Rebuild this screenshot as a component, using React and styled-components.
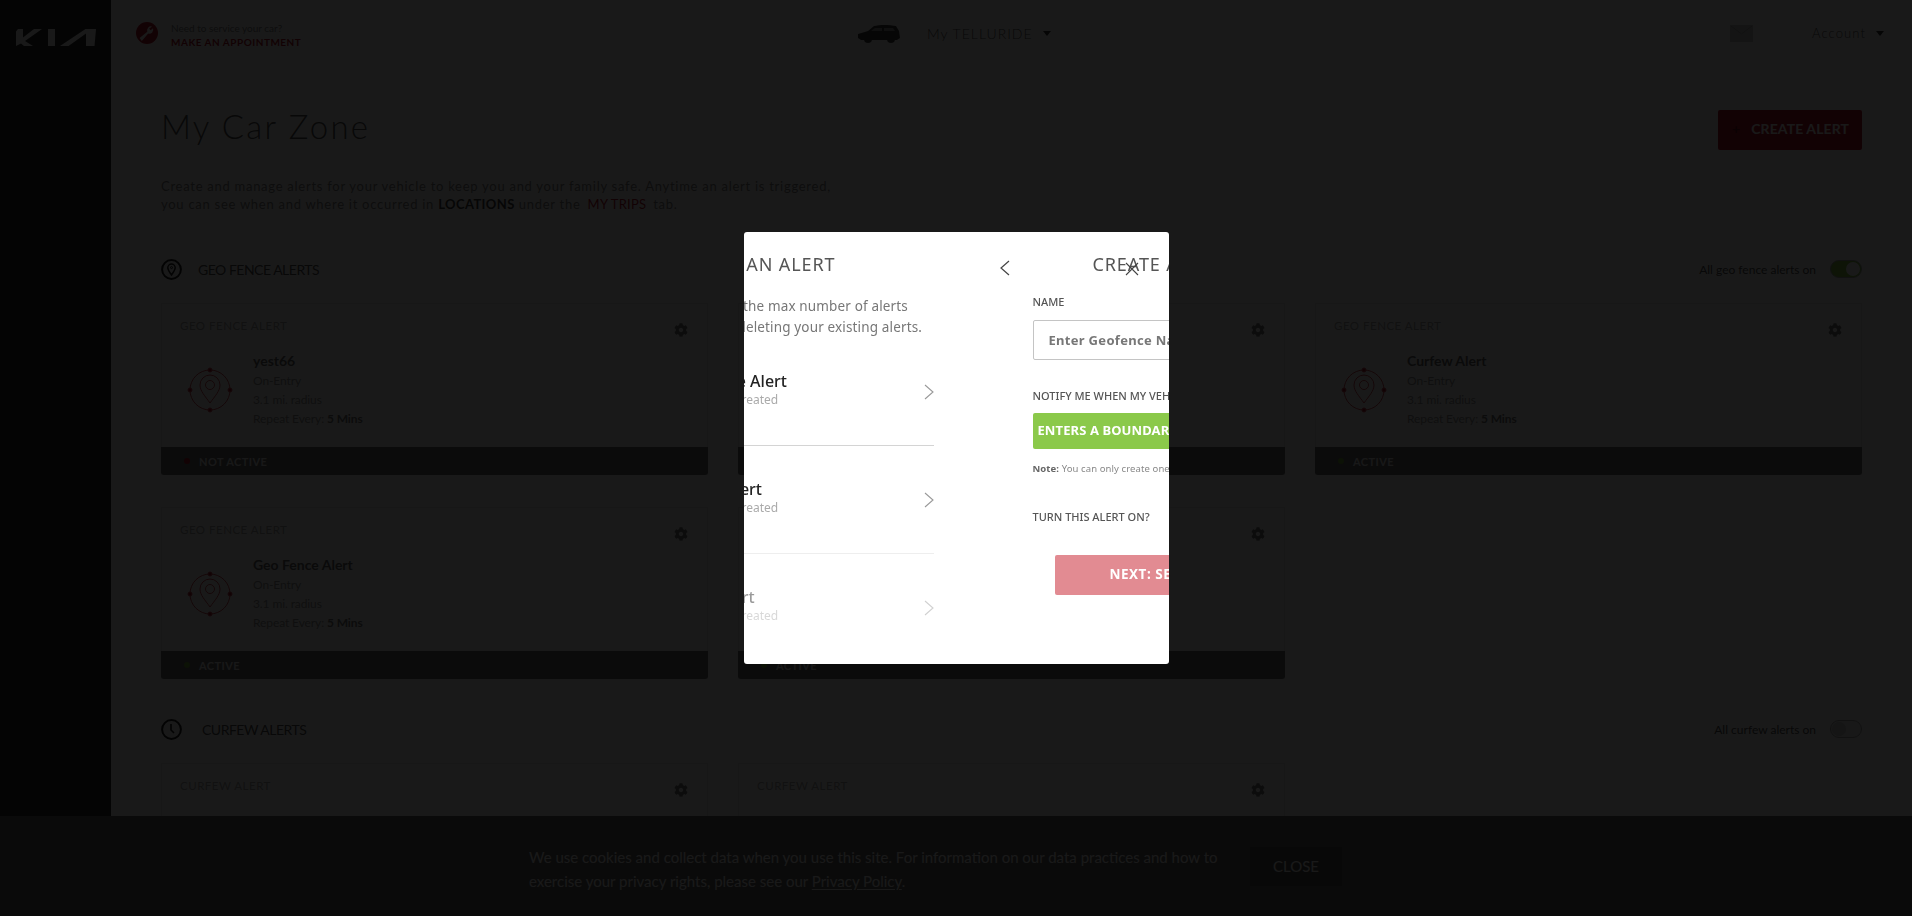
import styled, { createGlobalStyle } from "styled-components";
import { FaCog } from "react-icons/fa";

const GlobalStyle = createGlobalStyle`
  html, body {
    margin: 0;
    padding: 0;
    height: 100%;
    overflow: hidden;
    background: #fff;
    font-family: "Noto Sans", "Liberation Sans", sans-serif;
  }
  * { box-sizing: border-box; }
`;

const Page = styled.div`
  display: flex;
  width: 1912px;
  height: 916px;
  overflow: hidden;
  background: #fff;
`;

const Sidebar = styled.aside`
  flex: 0 0 111px;
  background: #2e2e2e;
  padding: 28px 0 0 16px;
`;

const Main = styled.main`
  flex: 1;
  min-width: 0;
`;

const TopBar = styled.header`
  display: flex;
  align-items: center;
  height: 66px;
  padding: 0 28px 0 25px;
`;

const Service = styled.div`
  display: flex;
  align-items: center;
  gap: 13px;
  width: 721px;
`;

const ServiceText = styled.div`
  margin-top: 3px;
  font-family: "Lato", sans-serif;
  font-size: 10px;
  line-height: 14px;
  color: #888;
`;

const ServiceLink = styled.div`
  font-size: 10px;
  font-weight: 700;
  letter-spacing: 0.5px;
  color: #bb162b;
`;

const Vehicle = styled.div`
  display: flex;
  align-items: center;
  gap: 26px;
`;

const VehicleName = styled.span`
  font-family: "Lato", sans-serif;
  font-size: 14px;
  font-weight: 300;
  letter-spacing: 1px;
  color: #555;
`;

const Caret = styled.i`
  display: block;
  width: 0;
  height: 0;
  margin-left: ${(p) => p.$gap}px;
  border-left: 4.5px solid transparent;
  border-right: 4.5px solid transparent;
  border-top: 5px solid #333;
`;

const AccountArea = styled.div`
  display: flex;
  align-items: center;
  margin-left: auto;
`;

const Account = styled.span`
  margin-left: 59px;
  font-family: "Lato", sans-serif;
  font-size: 13px;
  font-weight: 300;
  letter-spacing: 1.1px;
  color: #555;
`;

const Content = styled.div`
  padding: 44px 50px 0;
`;

const TitleRow = styled.div`
  display: flex;
  justify-content: space-between;
  height: 40px;
`;

const Title = styled.h1`
  margin: -2px 0 0;
  font-family: "Lato", sans-serif;
  font-size: 33px;
  line-height: 36px;
  font-weight: 300;
  letter-spacing: 2.2px;
  color: #555;
`;

const CreateButton = styled.button`
  display: flex;
  align-items: center;
  width: 144px;
  height: 40px;
  padding: 0 0 3px 14px;
  gap: 11px;
  border: 0;
  border-radius: 2px;
  background: #bb162b;
  color: #fff;
  font-family: "Lato", sans-serif;
  font-size: 14px;
  font-weight: 700;
  letter-spacing: 0.1px;
  white-space: nowrap;

  span { color: #701020; }
`;

const Intro = styled.p`
  margin: 27px 0 0;
  font-family: "Lato", sans-serif;
  font-size: 13px;
  line-height: 18px;
  letter-spacing: 0.73px;
  color: #888;

  b { color: #444; letter-spacing: 0.4px; }
  em { font-style: normal; margin: 0 3px; letter-spacing: 0.2px; color: #bb162b; }
`;

const SectionHead = styled.div`
  display: flex;
  align-items: center;
  height: 20px;
  margin-top: ${(p) => p.$top}px;
`;

const SectionTitle = styled.h2`
  margin: 0 0 0 ${(p) => p.$gap}px;
  font-family: "Lato", sans-serif;
  font-size: 14px;
  font-weight: 400;
  letter-spacing: -0.5px;
  color: #555;
`;

const AllToggle = styled.div`
  display: flex;
  align-items: center;
  gap: 14px;
  margin-left: auto;
  font-family: "Lato", sans-serif;
  font-size: 12px;
  color: #555;
`;

const Toggle = styled.span`
  display: flex;
  justify-content: ${(p) => (p.$on ? "flex-end" : "flex-start")};
  width: 32px;
  height: 18px;
  padding: 1px;
  border-radius: 9px;
  background: ${(p) => (p.$on ? "#8bc94a" : "#f0f0f0")};
  border: 1px solid #aaa;
`;

const Knob = styled.span`
  width: 14px;
  height: 14px;
  border-radius: 50%;
  background: ${(p) => (p.$on ? "#fff" : "#cfcfcf")};
`;

const CardGrid = styled.div`
  display: grid;
  grid-template-columns: repeat(3, 547px);
  gap: 32px 30px;
  margin-top: 24px;
`;

const Card = styled.article`
  display: flex;
  flex-direction: column;
  height: 172px;
  border: 1px solid #ececec;
  border-bottom: 0;
`;

const CardHead = styled.div`
  display: flex;
  justify-content: space-between;
  padding: 15px 19px 0 18px;
  color: #7a7a7a;

  svg { margin-top: 4px; }
`;

const CardKind = styled.span`
  font-family: "Lato", sans-serif;
  font-size: 11.5px;
  line-height: 14px;
  letter-spacing: 0.5px;
  color: #aaa;
`;

const CardBody = styled.div`
  flex: 1;
  display: flex;
  align-items: center;
  gap: 20px;
  padding: 0 0 0 25px;
  margin-top: -5px;
`;

const Details = styled.div`
  font-family: "Lato", sans-serif;
  font-size: 12px;
  line-height: 19px;
  letter-spacing: -0.1px;
  color: #999;

  b { color: #777; }
`;

const Name = styled.div`
  margin-bottom: 1px;
  font-size: 14px;
  font-weight: 700;
  letter-spacing: 0;
  color: #6a6a6a;
`;

const StatusBar = styled.div`
  display: flex;
  align-items: center;
  gap: 9px;
  height: 28px;
  margin: 0 -1px;
  padding-left: 23px;
  border-radius: 0 0 3px 3px;
  background: #6e6e6e;
  font-family: "Lato", sans-serif;
  font-size: 11px;
  font-weight: 700;
  letter-spacing: 0.4px;
  color: #f0f0f0;
`;

const Dot = styled.i`
  width: 6px;
  height: 6px;
  border-radius: 50%;
  background: ${(p) => (p.$active ? "#7fb33f" : "#bb162b")};
`;

const CookieBar = styled.footer`
  position: fixed;
  left: 0;
  right: 0;
  bottom: 0;
  display: flex;
  align-items: center;
  height: 100px;
  padding-left: 529px;
  background: #666;
`;

const CookieText = styled.p`
  width: 700px;
  margin: 6px 0 0;
  font-family: "Lato", sans-serif;
  font-size: 15px;
  line-height: 24px;
  color: #fff;

  u { text-underline-offset: 2px; }
`;

const CookieClose = styled.button`
  width: 92px;
  height: 39px;
  margin: 0 0 0 21px;
  border: 0;
  background: #555;
  color: #fff;
  font-family: "Lato", sans-serif;
  font-size: 15px;
`;

const Overlay = styled.div`
  position: fixed;
  inset: 0;
  display: flex;
  justify-content: center;
  align-items: flex-start;
  padding-top: 232px;
  background: rgba(0, 0, 0, 0.9);
`;

const Modal = styled.div`
  position: relative;
  width: 425px;
  height: 432px;
  overflow: hidden;
  border-radius: 3px;
  background: #fff;
`;

const CloseIcon = styled.svg`
  position: absolute;
  top: 30px;
  left: 381px;
`;

const Track = styled.div`
  display: flex;
  width: 850px;
  margin-left: -207px;
`;

const Slide = styled.section`
  position: relative;
  flex: 0 0 425px;
  padding-top: 21px;
`;

const SlideTitle = styled.h3`
  margin: 0;
  text-align: center;
  font-size: 18px;
  line-height: 22px;
  font-weight: 400;
  letter-spacing: 0.9px;
  white-space: nowrap;
  color: #555;
`;

const Description = styled.p`
  margin: 21px 25px 0;
  text-align: center;
  font-size: 13.5px;
  line-height: 21px;
  letter-spacing: 0.15px;
  white-space: nowrap;
  color: #777;
`;

const TypeList = styled.ul`
  list-style: none;
  margin: 0 28px 0 55px;
  padding: 0;
`;

const TypeRow = styled.li`
  display: flex;
  align-items: center;
  justify-content: space-between;
  height: 108px;
  padding-left: 75px;
  border-bottom: 1px solid ${(p) => p.$rule};
`;

const TypeLabel = styled.div`
  padding-bottom: 3px;
  opacity: ${(p) => (p.$dim ? 0.45 : 1)};
`;

const TypeName = styled.div`
  font-size: 16px;
  line-height: 20px;
  font-weight: 500;
  color: #222;
`;

const TypeCount = styled.div`
  font-size: 12px;
  line-height: 18px;
  color: #aaa;
`;

const RowChevron = styled.svg`
  opacity: ${(p) => (p.$dim ? 0.45 : 1)};
`;

const BackIcon = styled.svg`
  position: absolute;
  top: 28px;
  left: 38px;
`;

const Form = styled.div`
  padding: 0 40px 0 71px;
`;

const Label = styled.label`
  display: block;
  margin-top: ${(p) => p.$top}px;
  font-size: 11px;
  line-height: 14px;
  font-weight: 500;
  white-space: nowrap;
  color: #555;
`;

const NameInput = styled.div`
  height: 40px;
  margin-top: 11px;
  padding-left: 15px;
  border: 1px solid #c4c4c4;
  border-radius: 2px;
  font-size: 13px;
  line-height: 38px;
  font-weight: 700;
  letter-spacing: 0.3px;
  white-space: nowrap;
  color: #777;
`;

const Segments = styled.div`
  display: flex;
  margin-top: 10px;
`;

const Segment = styled.div`
  flex: 0 0 150px;
  height: 36px;
  border-radius: 2px 0 0 2px;
  background: ${(p) => (p.$selected ? "#8bc94a" : "#eee")};
  color: ${(p) => (p.$selected ? "#fff" : "#777")};
  text-align: center;
  font-size: 13px;
  line-height: 35px;
  font-weight: 700;
  letter-spacing: 0.1px;
  white-space: nowrap;
`;

const Note = styled.p`
  margin: 13px 0 0;
  font-size: 9.5px;
  line-height: 14px;
  letter-spacing: 0.1px;
  white-space: nowrap;
  color: #888;

  b { color: #666; }
`;

const NextButton = styled.div`
  width: 238px;
  height: 40px;
  margin: 31px 0 0 22px;
  border-radius: 2px;
  background: #e28b92;
  color: #fff;
  text-align: center;
  font-size: 13.5px;
  line-height: 39px;
  font-weight: 700;
  letter-spacing: 0.5px;
  white-space: nowrap;
`;

function KiaLogo() {
  return (
    <svg width="80" height="19" viewBox="0 0 80 19" fill="#fff">
      <path d="M0 18V3.5L2 1h5v8.5L18 1h8L9 13l8 5H8L5 15.5 0 18z" />
      <path d="M32 1h7v17h-7z" />
      <path d="M44 18h8.5L70 5.5V18h8.5L80 1H69.5z" />
    </svg>
  );
}

function WrenchIcon() {
  return (
    <svg width="22" height="22" viewBox="0 0 22 22">
      <circle cx="11" cy="11" r="11" fill="#bb162b" />
      <path
        d="M16 4.500a4 4 0 0 0-4.700 5.200L3.600 16l2.200 3 6.400-7.400A4 4 0 0 0 17 6.300l-2.300 2-1.600-1.500z"
        fill="#fff"
      />
    </svg>
  );
}

function CarIcon() {
  return (
    <svg width="44" height="22" viewBox="0 0 44 22" fill="#444">
      <path d="M1 12l10-3 6-5c5-1.500 16-1.500 22 0l3 5 1 7-3 2H4l-3-2z" />
      <path d="M18 6h7v3H14zM27 6h9l2 3H27z" fill="#999" />
      <circle cx="11" cy="17" r="4" />
      <circle cx="34" cy="17" r="4" />
    </svg>
  );
}

function MailIcon() {
  return (
    <svg width="23" height="17" viewBox="0 0 23 17">
      <rect width="23" height="17" fill="#ccc" />
      <path d="M1 1l10.500 8L22 1" fill="none" stroke="#aaa" />
    </svg>
  );
}

function PinBadge() {
  return (
    <svg width="21" height="21" viewBox="0 0 21 21" fill="none" stroke="#222" strokeWidth="2">
      <circle cx="10.5" cy="10.5" r="9.4" />
      <path d="M10.5 16c-2-3-3.700-5-3.700-7.200a3.700 3.700 0 0 1 7.400 0C14.200 11 12.500 13 10.500 16z" strokeWidth="1.5" />
      <circle cx="10.5" cy="8.600" r="1" strokeWidth="1" />
    </svg>
  );
}

function ClockBadge() {
  return (
    <svg width="21" height="21" viewBox="0 0 21 21" fill="none" stroke="#222" strokeWidth="2">
      <circle cx="10.5" cy="10.5" r="9.4" />
      <path d="M10 5v6l3 3" strokeWidth="1.6" />
    </svg>
  );
}

function GeoIcon() {
  return (
    <svg width="46" height="46" viewBox="0 0 46 46" fill="none" stroke="#d04a55" strokeWidth="1">
      <circle cx="23" cy="23" r="20" />
      <circle cx="23" cy="3" r="2" fill="#bb162b" />
      <circle cx="23" cy="43" r="2" fill="#bb162b" />
      <circle cx="3" cy="23" r="2" fill="#bb162b" />
      <circle cx="43" cy="23" r="2" fill="#bb162b" />
      <path d="M23 36c-5-7-10-12-10-18a10 10 0 0 1 20 0c0 6-5 11-10 18z" />
      <circle cx="23" cy="18" r="4.500" />
    </svg>
  );
}

function AlertCard({ kind, name, active }) {
  return (
    <Card>
      <CardHead>
        <CardKind>{kind}</CardKind>
        <FaCog size={14} />
      </CardHead>
      {name && (
        <CardBody>
          <GeoIcon />
          <Details>
            <Name>{name}</Name>
            <div>On-Entry</div>
            <div>3.1 mi. radius</div>
            <div>
              Repeat Every: <b>5 Mins</b>
            </div>
          </Details>
        </CardBody>
      )}
      {name && (
        <StatusBar>
          <Dot $active={active} />
          {active ? "ACTIVE" : "NOT ACTIVE"}
        </StatusBar>
      )}
    </Card>
  );
}

const GEO_ALERTS = [
  { name: "yest66", active: false },
  { name: "Geo Fence Alert 2", active: true },
  { name: "Curfew Alert", active: true },
  { name: "Geo Fence Alert", active: true },
  { name: "Geo Fence Alert 3", active: true },
];

const ALERT_TYPES = [
  { name: "Geo Fence Alert", count: "5 of 5 alerts created", rule: "#d4d4d4" },
  { name: "Curfew Alert", count: "2 of 5 alerts created", rule: "#eeeeee" },
  { name: "Speed Alert", count: "0 of 5 alerts created", rule: "transparent", dim: true },
];

export default function App() {
  return (
    <>
      <GlobalStyle />
      <Page>
        <Sidebar>
          <KiaLogo />
        </Sidebar>
        <Main>
          <TopBar>
            <Service>
              <WrenchIcon />
              <ServiceText>
                Need to service your car?
                <ServiceLink>MAKE AN APPOINTMENT</ServiceLink>
              </ServiceText>
            </Service>
            <Vehicle>
              <CarIcon />
              <VehicleName>My TELLURIDE</VehicleName>
            </Vehicle>
            <Caret $gap={10} />
            <AccountArea>
              <MailIcon />
              <Account>Account</Account>
              <Caret $gap={10} />
            </AccountArea>
          </TopBar>
          <Content>
            <TitleRow>
              <Title>My Car Zone</Title>
              <CreateButton>
                <span>+</span>
                CREATE ALERT
              </CreateButton>
            </TitleRow>
            <Intro>
              Create and manage alerts for your vehicle to keep you and your family safe. Anytime an
              alert is triggered,
              <br />
              you can see when and where it occurred in <b>LOCATIONS</b> under the <em>MY TRIPS</em>{" "}
              tab.
            </Intro>
            <SectionHead $top={46}>
              <PinBadge />
              <SectionTitle $gap={16}>GEO FENCE ALERTS</SectionTitle>
              <AllToggle>
                All geo fence alerts on
                <Toggle $on>
                  <Knob $on />
                </Toggle>
              </AllToggle>
            </SectionHead>
            <CardGrid>
              {GEO_ALERTS.map((alert) => (
                <AlertCard key={alert.name} kind="GEO FENCE ALERT" {...alert} />
              ))}
            </CardGrid>
            <SectionHead $top={40}>
              <ClockBadge />
              <SectionTitle $gap={20}>CURFEW ALERTS</SectionTitle>
              <AllToggle>
                All curfew alerts on
                <Toggle>
                  <Knob />
                </Toggle>
              </AllToggle>
            </SectionHead>
            <CardGrid>
              <AlertCard kind="CURFEW ALERT" />
              <AlertCard kind="CURFEW ALERT" />
            </CardGrid>
          </Content>
        </Main>
      </Page>
      <CookieBar>
        <CookieText>
          We use cookies and collect data when you use this site. For information on our data
          practices and how to exercise your privacy rights, please see our <u>Privacy Policy</u>.
        </CookieText>
        <CookieClose>CLOSE</CookieClose>
      </CookieBar>
      <Overlay>
        <Modal>
          <Track>
            <Slide>
              <SlideTitle>CHOOSE AN ALERT</SlideTitle>
              <Description>
                You've already reached the max number of alerts
                <br />
                You can free up room by deleting your existing alerts.
              </Description>
              <TypeList>
                {ALERT_TYPES.map((type) => (
                  <TypeRow key={type.name} $rule={type.rule}>
                    <TypeLabel $dim={type.dim}>
                      <TypeName>{type.name}</TypeName>
                      <TypeCount>{type.count}</TypeCount>
                    </TypeLabel>
                    <RowChevron
                      $dim={type.dim}
                      width="10"
                      height="16"
                      viewBox="0 0 10 16"
                      fill="none"
                      stroke="#999"
                      strokeWidth="1.1"
                    >
                      <path d="M1 1l8 7-8 7" />
                    </RowChevron>
                  </TypeRow>
                ))}
              </TypeList>
            </Slide>
            <Slide>
              <BackIcon width="10" height="16" viewBox="0 0 10 16" fill="none" stroke="#444" strokeWidth="1.2">
                <path d="M9 1L1 8l8 7" />
              </BackIcon>
              <SlideTitle>CREATE AN ALERT</SlideTitle>
              <Form>
                <Label $top={20}>NAME</Label>
                <NameInput>Enter Geofence Name</NameInput>
                <Label $top={29}>NOTIFY ME WHEN MY VEHICLE:</Label>
                <Segments>
                  <Segment $selected>ENTERS A BOUNDARY</Segment>
                  <Segment>EXITS A BOUNDARY</Segment>
                </Segments>
                <Note>
                  <b>Note:</b> You can only create one alert at a time.
                </Note>
                <Label $top={34}>TURN THIS ALERT ON?</Label>
                <NextButton>NEXT: SET RADIUS</NextButton>
              </Form>
            </Slide>
          </Track>
          <CloseIcon width="14" height="14" viewBox="0 0 14 14" fill="none" stroke="#444" strokeWidth="1.1">
            <path d="M1 1l12 12M13 1L1 13" />
          </CloseIcon>
        </Modal>
      </Overlay>
    </>
  );
}
